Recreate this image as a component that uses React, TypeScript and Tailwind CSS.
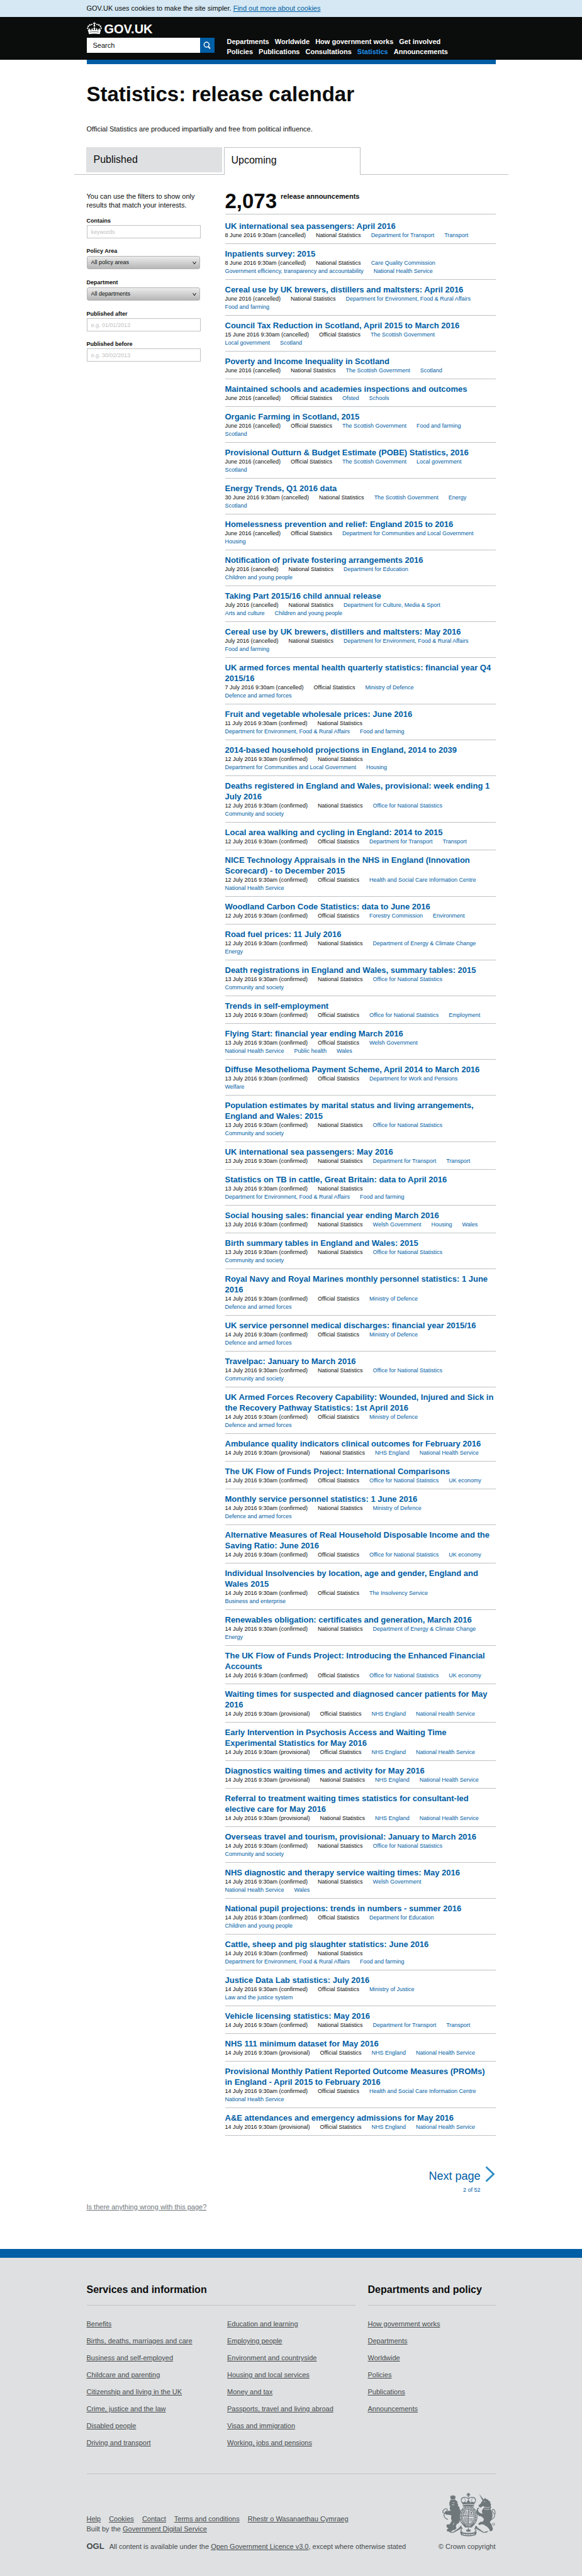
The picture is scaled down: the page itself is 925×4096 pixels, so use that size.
import React from "react";

type Release = [title: string, date: string, kind: "N" | "O", links: string];

// Links are separated by ";" and "|" starts a new line.
const RELEASES: Release[] = [
  ["UK international sea passengers: April 2016", "8 June 2016 9:30am (cancelled)", "N", "Department for Transport;Transport"],
  ["Inpatients survey: 2015", "8 June 2016 9:30am (cancelled)", "N", "Care Quality Commission|Government efficiency, transparency and accountability;National Health Service"],
  ["Cereal use by UK brewers, distillers and maltsters: April 2016", "June 2016 (cancelled)", "N", "Department for Environment, Food & Rural Affairs|Food and farming"],
  ["Council Tax Reduction in Scotland, April 2015 to March 2016", "15 June 2016 9:30am (cancelled)", "O", "The Scottish Government|Local government;Scotland"],
  ["Poverty and Income Inequality in Scotland", "June 2016 (cancelled)", "N", "The Scottish Government;Scotland"],
  ["Maintained schools and academies inspections and outcomes", "June 2016 (cancelled)", "O", "Ofsted;Schools"],
  ["Organic Farming in Scotland, 2015", "June 2016 (cancelled)", "O", "The Scottish Government;Food and farming|Scotland"],
  ["Provisional Outturn & Budget Estimate (POBE) Statistics, 2016", "June 2016 (cancelled)", "O", "The Scottish Government;Local government|Scotland"],
  ["Energy Trends, Q1 2016 data", "30 June 2016 9:30am (cancelled)", "N", "The Scottish Government;Energy|Scotland"],
  ["Homelessness prevention and relief: England 2015 to 2016", "June 2016 (cancelled)", "O", "Department for Communities and Local Government|Housing"],
  ["Notification of private fostering arrangements 2016", "July 2016 (cancelled)", "N", "Department for Education|Children and young people"],
  ["Taking Part 2015/16 child annual release", "July 2016 (cancelled)", "N", "Department for Culture, Media & Sport|Arts and culture;Children and young people"],
  ["Cereal use by UK brewers, distillers and maltsters: May 2016", "July 2016 (cancelled)", "N", "Department for Environment, Food & Rural Affairs|Food and farming"],
  ["UK armed forces mental health quarterly statistics: financial year Q4|2015/16", "7 July 2016 9:30am (cancelled)", "O", "Ministry of Defence|Defence and armed forces"],
  ["Fruit and vegetable wholesale prices: June 2016", "11 July 2016 9:30am (confirmed)", "N", "|Department for Environment, Food & Rural Affairs;Food and farming"],
  ["2014-based household projections in England, 2014 to 2039", "12 July 2016 9:30am (confirmed)", "N", "|Department for Communities and Local Government;Housing"],
  ["Deaths registered in England and Wales, provisional: week ending 1|July 2016", "12 July 2016 9:30am (confirmed)", "N", "Office for National Statistics|Community and society"],
  ["Local area walking and cycling in England: 2014 to 2015", "12 July 2016 9:30am (confirmed)", "O", "Department for Transport;Transport"],
  ["NICE Technology Appraisals in the NHS in England (Innovation|Scorecard) - to December 2015", "12 July 2016 9:30am (confirmed)", "O", "Health and Social Care Information Centre|National Health Service"],
  ["Woodland Carbon Code Statistics: data to June 2016", "12 July 2016 9:30am (confirmed)", "O", "Forestry Commission;Environment"],
  ["Road fuel prices: 11 July 2016", "12 July 2016 9:30am (confirmed)", "N", "Department of Energy & Climate Change|Energy"],
  ["Death registrations in England and Wales, summary tables: 2015", "13 July 2016 9:30am (confirmed)", "N", "Office for National Statistics|Community and society"],
  ["Trends in self-employment", "13 July 2016 9:30am (confirmed)", "O", "Office for National Statistics;Employment"],
  ["Flying Start: financial year ending March 2016", "13 July 2016 9:30am (confirmed)", "O", "Welsh Government|National Health Service;Public health;Wales"],
  ["Diffuse Mesothelioma Payment Scheme, April 2014 to March 2016", "13 July 2016 9:30am (confirmed)", "O", "Department for Work and Pensions|Welfare"],
  ["Population estimates by marital status and living arrangements,|England and Wales: 2015", "13 July 2016 9:30am (confirmed)", "N", "Office for National Statistics|Community and society"],
  ["UK international sea passengers: May 2016", "13 July 2016 9:30am (confirmed)", "N", "Department for Transport;Transport"],
  ["Statistics on TB in cattle, Great Britain: data to April 2016", "13 July 2016 9:30am (confirmed)", "N", "|Department for Environment, Food & Rural Affairs;Food and farming"],
  ["Social housing sales: financial year ending March 2016", "13 July 2016 9:30am (confirmed)", "N", "Welsh Government;Housing;Wales"],
  ["Birth summary tables in England and Wales: 2015", "13 July 2016 9:30am (confirmed)", "N", "Office for National Statistics|Community and society"],
  ["Royal Navy and Royal Marines monthly personnel statistics: 1 June|2016", "14 July 2016 9:30am (confirmed)", "O", "Ministry of Defence|Defence and armed forces"],
  ["UK service personnel medical discharges: financial year 2015/16", "14 July 2016 9:30am (confirmed)", "O", "Ministry of Defence|Defence and armed forces"],
  ["Travelpac: January to March 2016", "14 July 2016 9:30am (confirmed)", "N", "Office for National Statistics|Community and society"],
  ["UK Armed Forces Recovery Capability: Wounded, Injured and Sick in|the Recovery Pathway Statistics: 1st April 2016", "14 July 2016 9:30am (confirmed)", "O", "Ministry of Defence|Defence and armed forces"],
  ["Ambulance quality indicators clinical outcomes for February 2016", "14 July 2016 9:30am (provisional)", "N", "NHS England;National Health Service"],
  ["The UK Flow of Funds Project: International Comparisons", "14 July 2016 9:30am (confirmed)", "O", "Office for National Statistics;UK economy"],
  ["Monthly service personnel statistics: 1 June 2016", "14 July 2016 9:30am (confirmed)", "N", "Ministry of Defence|Defence and armed forces"],
  ["Alternative Measures of Real Household Disposable Income and the|Saving Ratio: June 2016", "14 July 2016 9:30am (confirmed)", "O", "Office for National Statistics;UK economy"],
  ["Individual Insolvencies by location, age and gender, England and|Wales 2015", "14 July 2016 9:30am (confirmed)", "O", "The Insolvency Service|Business and enterprise"],
  ["Renewables obligation: certificates and generation, March 2016", "14 July 2016 9:30am (confirmed)", "N", "Department of Energy & Climate Change|Energy"],
  ["The UK Flow of Funds Project: Introducing the Enhanced Financial|Accounts", "14 July 2016 9:30am (confirmed)", "O", "Office for National Statistics;UK economy"],
  ["Waiting times for suspected and diagnosed cancer patients for May|2016", "14 July 2016 9:30am (provisional)", "O", "NHS England;National Health Service"],
  ["Early Intervention in Psychosis Access and Waiting Time|Experimental Statistics for May 2016", "14 July 2016 9:30am (provisional)", "O", "NHS England;National Health Service"],
  ["Diagnostics waiting times and activity for May 2016", "14 July 2016 9:30am (provisional)", "N", "NHS England;National Health Service"],
  ["Referral to treatment waiting times statistics for consultant-led|elective care for May 2016", "14 July 2016 9:30am (provisional)", "N", "NHS England;National Health Service"],
  ["Overseas travel and tourism, provisional: January to March 2016", "14 July 2016 9:30am (confirmed)", "N", "Office for National Statistics|Community and society"],
  ["NHS diagnostic and therapy service waiting times: May 2016", "14 July 2016 9:30am (confirmed)", "N", "Welsh Government|National Health Service;Wales"],
  ["National pupil projections: trends in numbers - summer 2016", "14 July 2016 9:30am (confirmed)", "O", "Department for Education|Children and young people"],
  ["Cattle, sheep and pig slaughter statistics: June 2016", "14 July 2016 9:30am (confirmed)", "N", "|Department for Environment, Food & Rural Affairs;Food and farming"],
  ["Justice Data Lab statistics: July 2016", "14 July 2016 9:30am (confirmed)", "O", "Ministry of Justice|Law and the justice system"],
  ["Vehicle licensing statistics: May 2016", "14 July 2016 9:30am (confirmed)", "N", "Department for Transport;Transport"],
  ["NHS 111 minimum dataset for May 2016", "14 July 2016 9:30am (provisional)", "O", "NHS England;National Health Service"],
  ["Provisional Monthly Patient Reported Outcome Measures (PROMs)|in England - April 2015 to February 2016", "14 July 2016 9:30am (confirmed)", "O", "Health and Social Care Information Centre|National Health Service"],
  ["A&E attendances and emergency admissions for May 2016", "14 July 2016 9:30am (provisional)", "O", "NHS England;National Health Service"],
];

const NAV = ["Departments", "Worldwide", "How government works", "Get involved", "Policies", "Publications", "Consultations", "Statistics", "Announcements"];

const SERVICES = [
  ["Benefits", "Births, deaths, marriages and care", "Business and self-employed", "Childcare and parenting", "Citizenship and living in the UK", "Crime, justice and the law", "Disabled people", "Driving and transport"],
  ["Education and learning", "Employing people", "Environment and countryside", "Housing and local services", "Money and tax", "Passports, travel and living abroad", "Visas and immigration", "Working, jobs and pensions"],
];

const DEPARTMENTS = ["How government works", "Departments", "Worldwide", "Policies", "Publications", "Announcements"];

const META_LINKS = ["Help", "Cookies", "Contact", "Terms and conditions", "Rhestr o Wasanaethau Cymraeg"];

function Crown() {
  return (
    <svg viewBox="0 0 36 29" className="h-[20px] w-[24px]" fill="#fff" aria-hidden="true">
      <path d="M16.8 0h2.4l-.4 2.2 2.4-.5v2.6l-2.4-.5.6 3.2h-2.8l.6-3.2-2.4.5V1.700l2.400.5z" />
      <circle cx="18" cy="8.600" r="2.100" />
      <circle cx="7.200" cy="6.600" r="2" />
      <circle cx="11.600" cy="5.400" r="1.700" />
      <circle cx="3.600" cy="9.600" r="1.900" />
      <circle cx="1.900" cy="14" r="1.800" />
      <circle cx="28.800" cy="6.600" r="2" />
      <circle cx="24.400" cy="5.400" r="1.700" />
      <circle cx="32.400" cy="9.600" r="1.900" />
      <circle cx="34.100" cy="14" r="1.800" />
      <path d="M2 16.600c1 1.200 2.300 1.500 3.500.5l-.8-3.300 3.800 2.900c-.3 1.200-.1 2.400 1.100 3 1.400-.4 1.700-1.600 1-2.900l3-3.400.4 4.600c.9 1.200 2.100 1.300 3 .2l-1.300-2.400 1.200-3.400h2.200l1.200 3.400-1.300 2.400c.9 1.100 2.100 1 3-.2l.4-4.600 3 3.400c-.7 1.300-.4 2.500 1 2.900 1.200-.6 1.400-1.800 1.100-3l3.800-2.900-.8 3.300c1.200 1 2.500.7 3.500-.5l-3.200 11.600c-8.400-1.500-17.200-1.500-25.600 0z" />
      <path d="M6.800 23.600c7.400-1.300 15-1.300 22.400 0" fill="none" stroke="#0b0c0c" strokeWidth="1" />
    </svg>
  );
}

function CoatOfArms() {
  return (
    <svg viewBox="0 0 125 102" className="h-[69px] w-[85px]" fill="#6f777b" aria-hidden="true">
      {/* crown */}
      <path d="M59 0h4l-.8 2.600 2.800-.6v4l-2.800-.6.8 4h-4l.8-4-2.800.6v-4l2.800.6z" />
      <g fill="none" stroke="#6f777b" strokeWidth="1.800">
        <path d="M47.500 25c-5-6-4.500-13 2-14.500 5-1 9 .5 11.500 3.500 2.500-3 6.500-4.500 11.500-3.500 6.500 1.500 7 8.500 2 14.500" />
        <path d="M61 11v13" strokeDasharray="1.600 1" />
        <path d="M51 12c3 3 3.500 7 3 12M71 12c-3 3-3.500 7-3 12" strokeWidth="1" />
      </g>
      <path d="M47 20l3 2.600 2-3 2 3 3.500-1 1.500-3.600 2-1.500 2 1.500 1.500 3.600 3.500 1 2-3 2 3 3-2.600-.5 7.500c-9-2-18-2-27 0z" />
      <path d="M48 29c8.500-2 17.500-2 26 0v3c-8.500-2-17.500-2-26 0z" />
      {/* garter and shield */}
      <ellipse cx="61" cy="55" rx="18.500" ry="22.500" fill="none" stroke="#6f777b" strokeWidth="5.500" />
      <ellipse cx="61" cy="55" rx="18.500" ry="22.500" fill="none" stroke="#dee0e2" strokeWidth="2.600" strokeDasharray="1.400 2.200 2.600 1.700" />
      <ellipse cx="61" cy="55" rx="14" ry="17.500" fill="none" stroke="#6f777b" strokeWidth="1.600" />
      <path d="M61 38v35M47.500 54.500h27" stroke="#6f777b" strokeWidth="1.600" />
      <path d="M49.500 46h10M50.500 43h9M48.800 49h10.500M48.500 52h11M63 60h10M63 63h9M63 66h7" stroke="#6f777b" strokeWidth="1.500" strokeDasharray="3.400 1" />
      <path d="M63.500 41h6l3.500 5v5h-9.500zM51 58.500h8V70c-4-1.500-7-5-8-11.500" fill="none" stroke="#6f777b" strokeWidth="1.300" />
      <path d="M66 43.500c3 0 2 3 4.500 3.500l-3.500 2zM53 60v6M55 59.500v8M57 59.500v9" stroke="#6f777b" strokeWidth=".9" />
      <path d="M50 71c3 5 7 8 11 9 4-1 8-4 11-9l2 4-5 6H53l-5-6z" />
      {/* lion */}
      <path d="M18 6l2 2 1.500-3 1.500 2.500L24.500 4l1.500 3 2.500-2 .5 3 2-1-1.500 8H19.500z" />
      <path d="M19.500 16h10.500l3 2.500 3 2.500-1.500 2.500 2.500 3-1 3 3.500 3.500 1 5 2.500 4-2 3 1 4.500-2 5c1.500 6 1.500 11-1 15.500l-5 3-2.500 4.500 1 5-2 4.500c-2 1.500-4 .5-5-.5l-1 1.500c-4 2.500-9 3-13.500 2l-1-3.500 4-3.500-3.500-2-1.500-4 2.500-3.500 5 .5 5.500-8.500-2-5.500 1-7-5-1.500-7-.5-4-3 .5-3.500 3-2.500 3 1.500 3-2 5 1-2.500-5 1-6-2-4 .5-6z" />
      <path d="M24 22l4 1M22 27c2 1.500 4 1.500 5.500 0M24.500 75l3-5" stroke="#dee0e2" strokeWidth="1.200" fill="none" />
      <path d="M12 62c-7-3-10-8-7.500-13.500C7 44 12 44 11.500 39.500 11 36 6.500 36 4.500 39M4.500 39c-3.500 1-4.500 5-2.500 8" fill="none" stroke="#6f777b" strokeWidth="2" strokeLinecap="round" />
      {/* unicorn */}
      <path d="M86 2l10.500 13-3 2z" />
      <path d="M95 16l3.500-2.500L100 11l2 3 4 1 3.500 4 3 1.500-.5 3 2.500 3-1.500 3 1.500 4-2 3.500 2.500 5c3.500 7 4 15.500-1 22.500l-3 4 4 5 1.500 5 2 5-1 5-6 1.500-1.500-5-5.500-6-6.500-4.500-6-1-6 2-2-3.500 5-4 6.500-1 2-6-5.500-5.500-7-2-4.500-6-.5-8 3-1 2 6 5 3.500 4 .5-1.500-6 2.500-5 4.500-5-5-1.500-4 2.500-4-.5-2-3.500 5.500-5z" />
      <path d="M97 20l3 .5M99 33c4 2 8 2 11.500 0M97.500 37c4 2.500 9 2.500 13 .5" stroke="#dee0e2" strokeWidth="1.200" fill="none" />
      <path d="M113 63c7-2 11-7 9-13-1.500-4-6-5-5.500-9 .5-3 4.500-3 6 0 1 2.500 1.500 5 1.500 8" fill="none" stroke="#6f777b" strokeWidth="1.800" strokeLinecap="round" />
      <path d="M86 36c-4-1-5 3-3 5M90 34l-1-3" fill="none" stroke="#6f777b" strokeWidth="2" />
      <g fill="none" stroke="#6f777b" strokeWidth="1.200">
        <circle cx="103" cy="69.500" r="2.200" />
        <circle cx="102" cy="75" r="2.200" />
        <circle cx="113" cy="79" r="2.200" />
        <circle cx="120" cy="73.500" r="2.600" />
      </g>
      {/* scrolls */}
      <path d="M14 89l11 3L44 76.500l2 6L26 93.500l-8-.5z" />
      <path d="M108 89l-11 3L78 76.500l-2 6L96 93.500l8-.5z" />
      <path d="M26 89.500l15-9.500M96 89.500L81 80" stroke="#dee0e2" strokeWidth="2.400" strokeDasharray="1.500 1.600 2.400 1.300" />
      <path d="M41 80l5 3.500-3 5 4 4.500M81 80l-5 3.500 3 5-4 4.500" fill="none" stroke="#6f777b" strokeWidth="1.800" />
      <path d="M61 82l2.500 5 3.500-1-2 5h-8l-2-5 3.500 1z" />
      <path d="M41 91c13 4 27 4 40 0l-3 8c-11 3.600-23 3.600-34 0z" />
      <path d="M47 96.500c9.500 2 18.500 2 28 0" fill="none" stroke="#dee0e2" strokeWidth="2.800" strokeDasharray="2 1.200 3 1.600 2.600 1" />
    </svg>
  );
}

function ReleaseRow({ release, first }: { release: Release; first: boolean }) {
  const [title, date, kind, links] = release;
  const lines = links.split("|").map((line) => line.split(";").filter(Boolean));
  return (
    <li className={first ? "border-b border-[#bfc1c3] pb-[6px] pt-[10px]" : "border-b border-[#bfc1c3] pb-[6px] pt-[7px]"}>
      <h3 className="text-[13px] font-bold leading-[17px]">
        <a href="#" className="text-[#005ea5]">
          {title.split("|").map((line) => (
            <span key={line} className="block whitespace-nowrap">
              {line}
            </span>
          ))}
        </a>
      </h3>
      <div className="text-[9px] leading-[13px]">
        {lines.map((line, i) => (
          <ul key={i} className="flex gap-x-4 whitespace-nowrap">
            {i === 0 && <li>{date}</li>}
            {i === 0 && <li>{kind === "N" ? "National Statistics" : "Official Statistics"}</li>}
            {line.map((link) => (
              <li key={link}>
                <a href="#" className="text-[#005ea5]">
                  {link}
                </a>
              </li>
            ))}
          </ul>
        ))}
      </div>
    </li>
  );
}

function TextField({ id, label, placeholder }: { id: string; label: string; placeholder: string }) {
  return (
    <div className="flex flex-col gap-px">
      <label htmlFor={id} className="text-[9px] font-bold leading-[12px]">
        {label}
      </label>
      <input
        id={id}
        type="text"
        placeholder={placeholder}
        className="h-[21px] w-full border border-[#bfc1c3] bg-white px-[6px] text-[9px] placeholder:text-[#bfc1c3]"
      />
    </div>
  );
}

function SelectField({ id, label, value }: { id: string; label: string; value: string }) {
  return (
    <div className="flex flex-col gap-[2px] pb-px pr-px">
      <label htmlFor={id} className="text-[9px] font-bold leading-[12px]">
        {label}
      </label>
      <div className="relative">
        <select
          id={id}
          className="block h-[21px] w-full appearance-none rounded-[3px] border border-[#b4b4b4] bg-linear-to-b from-[#ececec] to-[#b6b6b6] px-[6px] text-[9px]"
        >
          <option>{value}</option>
        </select>
        <svg viewBox="0 0 6 6" className="pointer-events-none absolute right-[6px] top-[8px] size-[6px]" aria-hidden="true">
          <path d="M.5 1L3 5 5.500 1" fill="none" stroke="#0b0c0c" strokeWidth="1" />
        </svg>
      </div>
    </div>
  );
}

function FooterLinks({ links }: { links: string[] }) {
  return (
    <ul className="flex-1 whitespace-nowrap text-[11px] leading-[27px]">
      {links.map((link) => (
        <li key={link}>
          <a href="#" className="underline">
            {link}
          </a>
        </li>
      ))}
    </ul>
  );
}

export default function App() {
  return (
    <div className="bg-white font-['Liberation_Sans',Arial,sans-serif] text-[#0b0c0c]">
      <div className="bg-[#d5e8f3]">
        <p className="mx-auto max-w-[650px] py-[6px] text-[11px] leading-[15px]">
          GOV.UK uses cookies to make the site simpler.{" "}
          <a href="#" className="text-[#005ea5] underline">
            Find out more about cookies
          </a>
        </p>
      </div>

      <header className="bg-[#0b0c0c] pt-2">
        <div className="mx-auto max-w-[650px]">
          <a href="#" className="flex h-[23px] items-start gap-[4px] text-white">
            <Crown />
            <span className="text-[20px] font-bold leading-[22px]">GOV.UK</span>
          </a>
          <div className="flex gap-5 pb-[5px]">
            <form className="mt-[2px] flex h-[24px] w-[203px]" role="search">
              <input
                type="search"
                aria-label="Search"
                placeholder="Search"
                className="min-w-0 flex-1 bg-white px-[10px] text-[11px] text-[#0b0c0c] placeholder:text-[#0b0c0c]"
              />
              <button type="submit" aria-label="Submit search" className="flex w-[23px] items-center justify-center bg-[#005ea5]">
                <svg viewBox="0 0 18 18" className="size-[12px]" fill="none" stroke="#fff" aria-hidden="true">
                  <circle cx="8" cy="7.500" r="6" strokeWidth="2.200" />
                  <path d="M12 12l4.500 5" strokeWidth="3" />
                </svg>
              </button>
            </form>
            <nav className="w-[360px]">
              <ul className="flex flex-wrap gap-x-[9px] text-[11px] font-bold leading-[16px]">
                {NAV.map((item) => (
                  <li key={item}>
                    <a href="#" className={item === "Statistics" ? "text-[#1d8feb]" : "text-white"}>
                      {item}
                    </a>
                  </li>
                ))}
              </ul>
            </nav>
          </div>
        </div>
      </header>

      <main className="mx-auto max-w-[650px]">
        <div className="h-[7px] bg-[#005ea5]" />
        <h1 className="mt-7 text-[33px] font-bold leading-[40px]">Statistics: release calendar</h1>
        <p className="mt-7 text-[11px] leading-[14px]">Official Statistics are produced impartially and free from political influence.</p>

        <nav className="-mx-5 mt-[22px] flex h-[44px] items-start gap-[3px] border-b border-[#bfc1c3] px-[19px] text-[16px]">
          <a href="#" className="flex h-[40px] w-[216px] items-center bg-[#dee0e2] px-3 leading-[20px]">
            Published
          </a>
          <a href="#" className="flex h-[44px] w-[217px] border border-b-0 border-[#bfc1c3] bg-white px-[11px] pt-[10px] leading-[20px]" aria-current="page">
            Upcoming
          </a>
        </nav>

        <div className="flex gap-[39px]">
          <form className="flex w-[181px] flex-col pt-[27px]">
            <p className="text-[11px] leading-[14px]">
              You can use the filters to show only
              <br />
              results that match your interests.
            </p>
            <div className="mt-3 flex flex-col gap-[14px]">
              <TextField id="keywords" label="Contains" placeholder="keywords" />
              <SelectField id="topics" label="Policy Area" value="All policy areas" />
              <SelectField id="departments" label="Department" value="All departments" />
              <TextField id="from-date" label="Published after" placeholder="e.g. 01/01/2013" />
              <TextField id="to-date" label="Published before" placeholder="e.g. 30/02/2013" />
            </div>
          </form>

          <section className="min-w-0 flex-1 pt-[25px]">
            <h2 className="flex items-start gap-[6px] border-b border-[#bfc1c3] pb-1">
              <span className="text-[33px] font-bold leading-[33px]">2,073</span>
              <span className="mt-[2px] text-[11px] font-bold leading-[14px]">release announcements</span>
            </h2>
            <ol>
              {RELEASES.map((release, i) => (
                <ReleaseRow key={release[0] + release[1]} release={release} first={i === 0} />
              ))}
            </ol>

            <nav className="mt-12 flex justify-end">
              <a href="#" className="flex gap-[6px] text-[#005ea5]">
                <span className="flex flex-col items-end gap-[5px] pt-[5px]">
                  <span className="text-[18px] leading-[22px]">Next page</span>
                  <span className="text-[9px] leading-[12px]">2 of 52</span>
                </span>
                <svg viewBox="0 0 18 26" className="h-[26px] w-[18px]" aria-hidden="true">
                  <path d="M2.500 1.500L14.500 13 2.500 24.500" fill="none" stroke="#2b8cc4" strokeWidth="2.800" />
                </svg>
              </a>
            </nav>
          </section>
        </div>

        <p className="mt-[14px] pb-[60px] text-[11px] leading-[14px]">
          <a href="#" className="text-[#6f777b] underline">
            Is there anything wrong with this page?
          </a>
        </p>
      </main>

      <footer className="border-t-[14px] border-[#005ea5] bg-[#dee0e2] pb-10 pt-[41px] text-[#454a4c]">
        <div className="mx-auto max-w-[650px]">
          <div className="flex gap-5">
            <section className="flex-1">
              <h2 className="border-b border-[#bfc1c3] pb-[14px] text-[16px] font-bold leading-[20px] text-[#0b0c0c]">Services and information</h2>
              <div className="mt-[16px] flex gap-5">
                <FooterLinks links={SERVICES[0]} />
                <FooterLinks links={SERVICES[1]} />
              </div>
            </section>
            <section className="w-[203px]">
              <h2 className="whitespace-nowrap border-b border-[#bfc1c3] pb-[14px] text-[16px] font-bold leading-[20px] text-[#0b0c0c]">Departments and policy</h2>
              <div className="mt-[16px] flex">
                <FooterLinks links={DEPARTMENTS} />
              </div>
            </section>
          </div>

          <div className="mt-[35px] flex items-end justify-between border-t border-[#bfc1c3] pt-[30px] text-[11px]">
            <div>
              <ul className="flex gap-[13px] leading-[16px]">
                {META_LINKS.map((link) => (
                  <li key={link}>
                    <a href="#" className="underline">
                      {link}
                    </a>
                  </li>
                ))}
              </ul>
              <p className="leading-[16px]">
                Built by the{" "}
                <a href="#" className="underline">
                  Government Digital Service
                </a>
              </p>
              <div className="mt-[13px] flex gap-2 leading-[14px]">
                <span className="text-[13px] font-bold">OGL</span>
                <p>
                  All content is available under the{" "}
                  <a href="#" className="underline">
                    Open Government Licence v3.0
                  </a>
                  , except where otherwise stated
                </p>
              </div>
            </div>
            <a href="#" className="flex flex-col items-end gap-[9px] leading-[14px]">
              <CoatOfArms />
              © Crown copyright
            </a>
          </div>
        </div>
      </footer>
    </div>
  );
}
